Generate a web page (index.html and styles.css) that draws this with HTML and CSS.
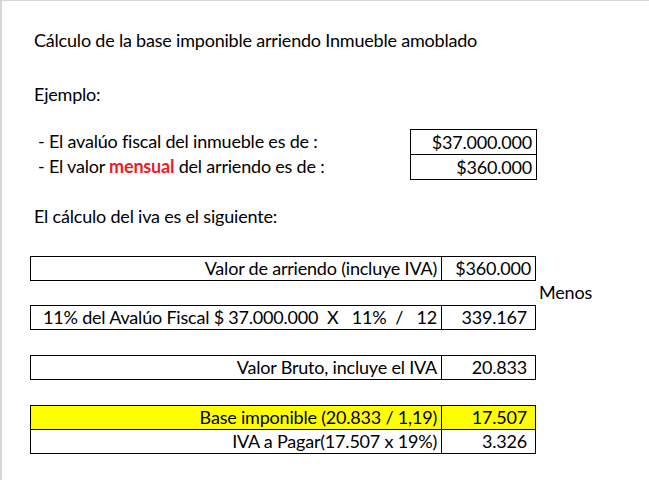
FILE: index.html
```html
<!DOCTYPE html>
<html lang="es">
<head>
<meta charset="utf-8">
<link rel="stylesheet" href="styles.css">
</head>
<body>
<div class="sheet">
  <div class="row title"><span>Cálculo de la base imponible arriendo Inmueble amoblado</span></div>
  <div class="row ejemplo"><span>Ejemplo:</span></div>
  <div class="given">
    <div class="labels">
      <div class="line"><span>- El avalúo fiscal del inmueble es de :</span></div>
      <div class="line"><span>- El valor <b class="red">mensual</b> del arriendo es de :</span></div>
    </div>
    <div class="vbox">
      <div class="vcell"><span>$37.000.000</span></div>
      <div class="vcell sep"><span>$360.000</span></div>
    </div>
  </div>
  <div class="row calc"><span>El cálculo del iva es el siguiente:</span></div>

  <div class="box box-f">
    <div class="cell lbl"><span>Valor de arriendo (incluye IVA)</span></div>
    <div class="cell val"><span>$360.000</span></div>
  </div>
  <div class="row menos"><span>Menos</span></div>
  <div class="box">
    <div class="cell lbl pre"><span>11% del Avalúo Fiscal $ 37.000.000  X   11%  /   12</span></div>
    <div class="cell val num"><span>339.167</span></div>
  </div>
  <div class="box gap">
    <div class="cell lbl"><span>Valor Bruto, incluye el IVA</span></div>
    <div class="cell val num"><span>20.833</span></div>
  </div>
  <div class="box gap">
    <div class="cell lbl yellow"><span>Base imponible (20.833 / 1,19)</span></div>
    <div class="cell val num yellow"><span>17.507</span></div>
    <div class="cell lbl sep"><span>IVA a Pagar(17.507 x 19%)</span></div>
    <div class="cell val num sep"><span>3.326</span></div>
  </div>
</div>
</body>
</html>
```

FILE: styles.css
```css
html, body {
  margin: 0;
  padding: 0;
  background: #ffffff;
}

body {
  font-family: "Lato", "Liberation Sans", sans-serif;
  font-size: 18px;
  letter-spacing: -0.2px;
  color: #000000;
}

.sheet {
  box-sizing: border-box;
  height: 480px;
  border-top: 1px solid #d6d6d6;
  border-left: 2px solid #d6d6d6;
  padding-left: 28px;
  display: flex;
  flex-direction: column;
  align-items: flex-start;
}

.row {
  box-sizing: border-box;
  height: 25px;
  display: flex;
  align-items: flex-end;
  line-height: 20px;
  padding-bottom: 3px;
  white-space: nowrap;
}

.title {
  margin-top: 27px;
  padding-left: 4px;
}

.ejemplo {
  margin-top: 29px;
  padding-left: 4px;
}

.given {
  margin-top: 22px;
  display: flex;
}

.labels {
  width: 380px;
  display: flex;
  flex-direction: column;
}

.line {
  box-sizing: border-box;
  height: 25px;
  display: flex;
  align-items: flex-end;
  line-height: 20px;
  padding-bottom: 3px;
  padding-left: 8px;
  white-space: nowrap;
}

.red {
  color: #ec1c24;
  font-weight: 700;
}

.vbox {
  box-sizing: border-box;
  width: 127px;
  border: 1px solid #000;
  display: flex;
  flex-direction: column;
}

.vcell {
  box-sizing: border-box;
  height: 24px;
  display: flex;
  align-items: flex-end;
  justify-content: flex-end;
  line-height: 20px;
  padding: 0 4px 2px 0;
}

.vcell.sep {
  height: 25px;
  border-top: 1px solid #000;
}

.calc {
  margin-top: 24px;
  padding-left: 4px;
}

.box {
  box-sizing: border-box;
  width: 506px;
  border: 1px solid #000;
  display: grid;
  grid-template-columns: 410px 94px;
}

.box-f {
  margin-top: 27px;
}

.box.gap {
  margin-top: 25px;
}

.cell {
  box-sizing: border-box;
  height: 23px;
  display: flex;
  align-items: flex-end;
  justify-content: flex-end;
  line-height: 20px;
  padding: 0 4px 2px 0;
  white-space: nowrap;
}

.cell.val {
  border-left: 1px solid #000;
}

.cell.num {
  padding-right: 8px;
}

.cell.sep {
  height: 24px;
  border-top: 1px solid #000;
}

.pre {
  white-space: pre;
}

.yellow {
  background: #ffff00;
}

.menos {
  height: 24px;
  padding-left: 509px;
}
```
